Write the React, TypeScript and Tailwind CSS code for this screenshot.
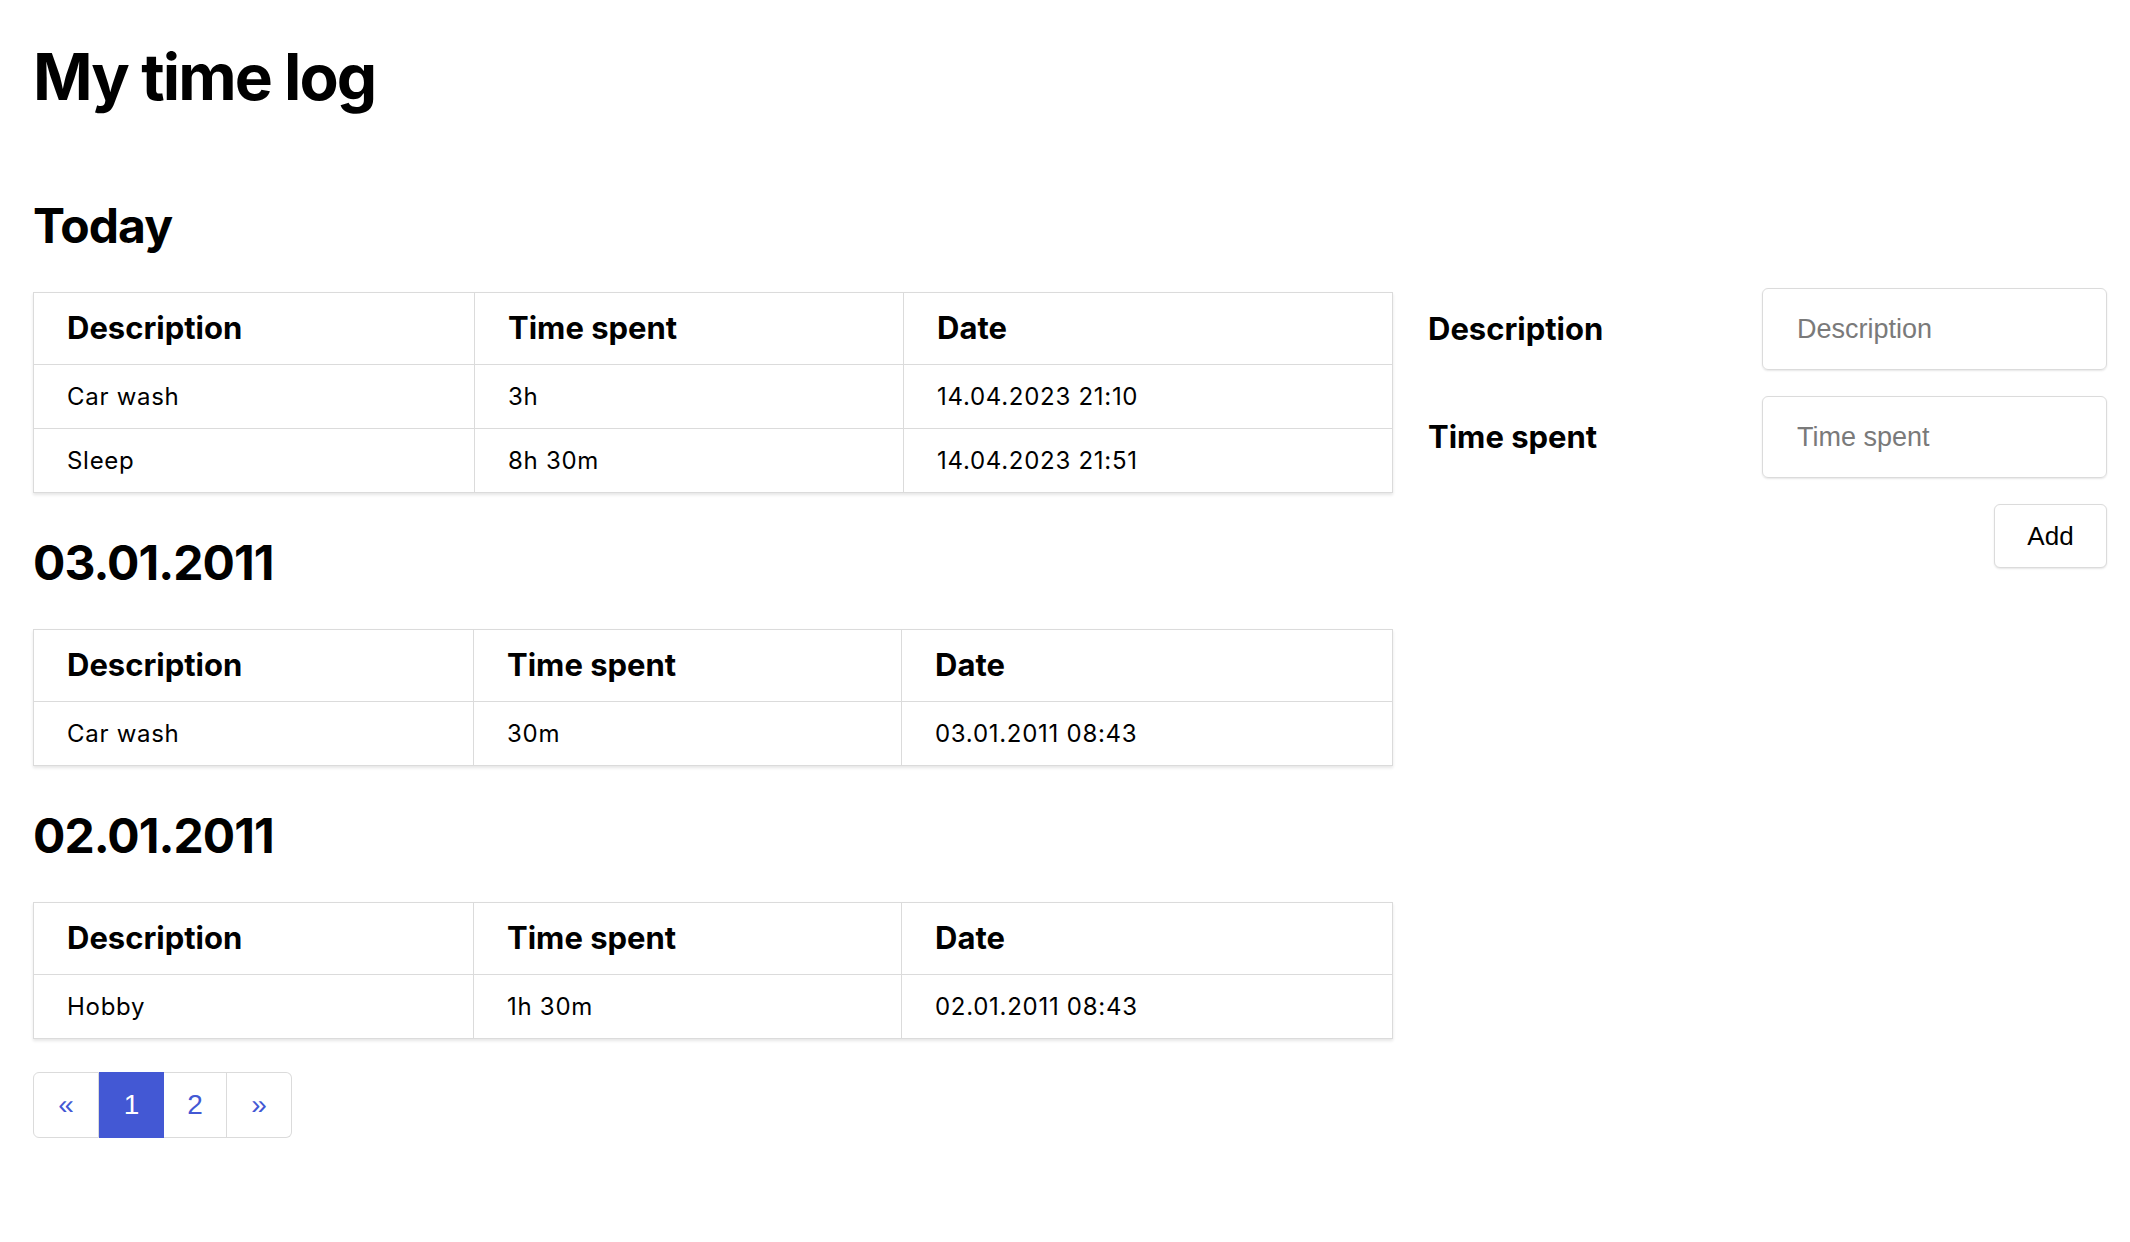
const entries = [
  {
    title: 'Today',
    widths: ['w-[441px]', 'w-[429px]'],
    rows: [
      { description: 'Car wash', spent: '3h', date: '14.04.2023 21:10' },
      { description: 'Sleep', spent: '8h 30m', date: '14.04.2023 21:51' },
    ],
  },
  {
    title: '03.01.2011',
    widths: ['w-[440px]', 'w-[428px]'],
    rows: [{ description: 'Car wash', spent: '30m', date: '03.01.2011 08:43' }],
  },
  {
    title: '02.01.2011',
    widths: ['w-[440px]', 'w-[428px]'],
    rows: [{ description: 'Hobby', spent: '1h 30m', date: '02.01.2011 08:43' }],
  },
];

type Row = { description: string; spent: string; date: string };

function LogTable({ rows, widths }: { rows: Row[]; widths: string[] }) {
  return (
    <table className="w-full table-fixed border-collapse border border-[#dbdbdb] shadow-[0_2px_3px_rgba(10,10,10,0.1)]">
      <thead>
        <tr>
          <th className={`${widths[0]} h-[72px] border border-[#dbdbdb] pl-[33px] pr-[20px] text-left text-[31px] font-bold`}>Description</th>
          <th className={`${widths[1]} h-[72px] border border-[#dbdbdb] pl-[33px] pr-[20px] text-left text-[31px] font-bold`}>Time spent</th>
          <th className="h-[72px] border border-[#dbdbdb] pl-[33px] pr-[20px] text-left text-[31px] font-bold">Date</th>
        </tr>
      </thead>
      <tbody>
        {rows.map((r, i) => (
          <tr key={i} className="text-[24px] tracking-[0.03em]">
            <td className="h-[64px] border border-[#dbdbdb] pl-[33px] pr-[20px]">{r.description}</td>
            <td className="h-[64px] border border-[#dbdbdb] pl-[33px] pr-[20px]">{r.spent}</td>
            <td className="h-[64px] border border-[#dbdbdb] pl-[33px] pr-[20px]">{r.date}</td>
          </tr>
        ))}
      </tbody>
    </table>
  );
}

export default function App() {
  return (
    <div className="min-h-screen bg-white text-black px-[33px] pt-[45px] font-['Inter',sans-serif]">
      <h1 className="text-[64px] font-bold leading-none tracking-[-0.03em]">My time log</h1>

      <div className="flex mt-[93px]">
        <div className="w-[1360px] shrink-0">
          {entries.map((section, i) => (
            <section key={section.title} className={i > 0 ? 'mt-[46px]' : ''}>
              <h2 className="text-[48px] font-bold leading-none tracking-[-0.02em] mb-[42px]">{section.title}</h2>
              <LogTable rows={section.rows} widths={section.widths} />
            </section>
          ))}

          <nav className="flex mt-[33px] font-['Liberation_Sans',Arial,sans-serif] text-[28px]">
            <button className="w-[66px] h-[66px] border border-[#dbdbdb] rounded-l-[6px] text-[#4358d4]">«</button>
            <button className="w-[65px] h-[66px] border border-[#4358d4] bg-[#4358d4] text-white">1</button>
            <button className="w-[63px] h-[66px] border-y border-r border-[#dbdbdb] text-[#4358d4]">2</button>
            <button className="w-[65px] h-[66px] border-y border-r border-[#dbdbdb] rounded-r-[6px] text-[#4358d4]">»</button>
          </nav>
        </div>

        <form className="flex-1 ml-[35px] mr-[-10px] mt-[86px]">
          <div className="grid grid-cols-[334px_1fr] items-center">
            <label className="text-[31px] font-bold">Description</label>
            <input
              placeholder="Description"
              className="h-[82px] w-full border border-[#dbdbdb] rounded-[6px] px-[34px] text-[27px] font-['Liberation_Sans',Arial,sans-serif] placeholder:text-[#7a7a7a] shadow-[0_1px_2px_rgba(10,10,10,0.1)] outline-none"
            />
          </div>
          <div className="grid grid-cols-[334px_1fr] items-center mt-[26px]">
            <label className="text-[31px] font-bold">Time spent</label>
            <input
              placeholder="Time spent"
              className="h-[82px] w-full border border-[#dbdbdb] rounded-[6px] px-[34px] text-[27px] font-['Liberation_Sans',Arial,sans-serif] placeholder:text-[#7a7a7a] shadow-[0_1px_2px_rgba(10,10,10,0.1)] outline-none"
            />
          </div>
          <div className="flex justify-end mt-[26px]">
            <button
              type="button"
              className="w-[113px] h-[64px] border border-[#dbdbdb] rounded-[6px] bg-white text-[26px] font-['Liberation_Sans',Arial,sans-serif] shadow-[0_1px_2px_rgba(10,10,10,0.1)]"
            >
              Add
            </button>
          </div>
        </form>
      </div>
    </div>
  );
}
